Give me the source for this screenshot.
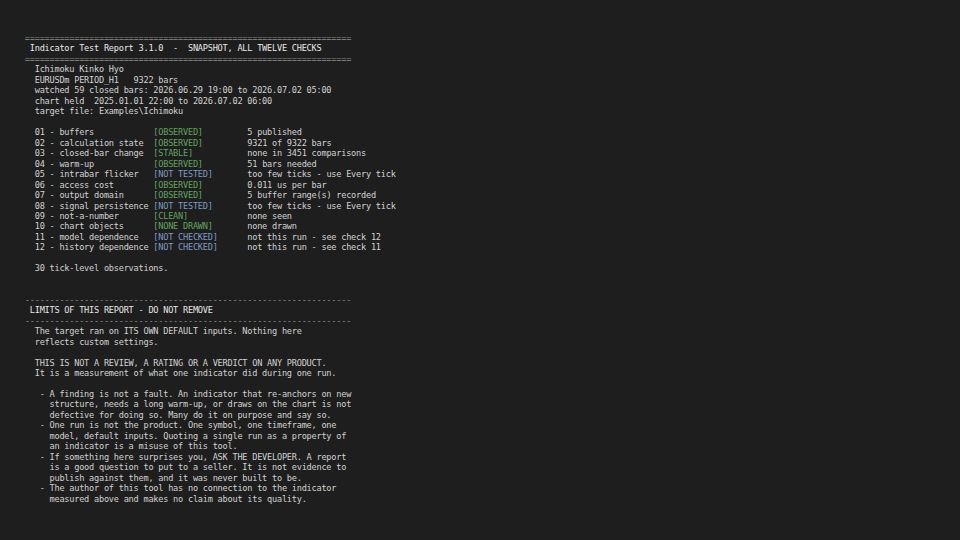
import React from 'react';

type Status = 'ok' | 'skip';

interface Check {
  no: string;
  name: string;
  tag: string;
  status: Status;
  note: string;
}

const checks: Check[] = [
  { no: '01', name: 'buffers', tag: '[OBSERVED]', status: 'ok', note: '5 published' },
  { no: '02', name: 'calculation state', tag: '[OBSERVED]', status: 'ok', note: '9321 of 9322 bars' },
  { no: '03', name: 'closed-bar change', tag: '[STABLE]', status: 'ok', note: 'none in 3451 comparisons' },
  { no: '04', name: 'warm-up', tag: '[OBSERVED]', status: 'ok', note: '51 bars needed' },
  { no: '05', name: 'intrabar flicker', tag: '[NOT TESTED]', status: 'skip', note: 'too few ticks - use Every tick' },
  { no: '06', name: 'access cost', tag: '[OBSERVED]', status: 'ok', note: '0.011 us per bar' },
  { no: '07', name: 'output domain', tag: '[OBSERVED]', status: 'ok', note: '5 buffer range(s) recorded' },
  { no: '08', name: 'signal persistence', tag: '[NOT TESTED]', status: 'skip', note: 'too few ticks - use Every tick' },
  { no: '09', name: 'not-a-number', tag: '[CLEAN]', status: 'ok', note: 'none seen' },
  { no: '10', name: 'chart objects', tag: '[NONE DRAWN]', status: 'ok', note: 'none drawn' },
  { no: '11', name: 'model dependence', tag: '[NOT CHECKED]', status: 'skip', note: 'not this run - see check 12' },
  { no: '12', name: 'history dependence', tag: '[NOT CHECKED]', status: 'skip', note: 'not this run - see check 11' },
];

const header = [
  'Ichimoku Kinko Hyo',
  'EURUSDm PERIOD_H1   9322 bars',
  'watched 59 closed bars: 2026.06.29 19:00 to 2026.07.02 05:00',
  'chart held  2025.01.01 22:00 to 2026.07.02 06:00',
  'target file: Examples\\Ichimoku',
];

const limits = [
  '  The target ran on ITS OWN DEFAULT inputs. Nothing here',
  '  reflects custom settings.',
  '',
  '  THIS IS NOT A REVIEW, A RATING OR A VERDICT ON ANY PRODUCT.',
  '  It is a measurement of what one indicator did during one run.',
  '',
  '   - A finding is not a fault. An indicator that re-anchors on new',
  '     structure, needs a long warm-up, or draws on the chart is not',
  '     defective for doing so. Many do it on purpose and say so.',
  '   - One run is not the product. One symbol, one timeframe, one',
  '     model, default inputs. Quoting a single run as a property of',
  '     an indicator is a misuse of this tool.',
  '   - If something here surprises you, ASK THE DEVELOPER. A report',
  '     is a good question to put to a seller. It is not evidence to',
  '     publish against them, and it was never built to be.',
  '   - The author of this tool has no connection to the indicator',
  '     measured above and makes no claim about its quality.',
];

function Line({ children, className = '' }: { children?: React.ReactNode; className?: string }) {
  return <div className={`h-[10.48px] whitespace-pre ${className}`}>{children ?? ' '}</div>;
}

function Rule({ char }: { char: string }) {
  return <Line className="text-[#8c8c8c]">{char.repeat(66)}</Line>;
}

export default function App() {
  return (
    <div
      className="h-screen w-full overflow-hidden bg-[#1e1e1e] pl-[24.8px] pt-[33px] text-[8.6px] leading-[10.48px] tracking-[-0.23px] text-[#d2d2d2]"
      style={{ fontFamily: '"DejaVu Sans Mono", "Liberation Mono", monospace' }}
    >
      <Rule char="=" />
      <Line className="text-[#e8e8e8]">{' Indicator Test Report 3.1.0  -  SNAPSHOT, ALL TWELVE CHECKS'}</Line>
      <Rule char="=" />
      {header.map((h) => (
        <Line key={h}>{'  ' + h}</Line>
      ))}
      <Line />

      {checks.map((c) => (
        <Line key={c.no}>
          {('  ' + c.no + ' - ' + c.name).padEnd(26)}
          <span className={c.status === 'ok' ? 'text-[#62a35f]' : 'text-[#7c9cc4]'}>{c.tag}</span>
          {' '.repeat(19 - c.tag.length)}
          {c.note}
        </Line>
      ))}
      <Line />
      <Line>{'  30 tick-level observations.'}</Line>
      <Line />
      <Line />

      <Rule char="-" />
      <Line className="text-[#e8e8e8]">{' LIMITS OF THIS REPORT - DO NOT REMOVE'}</Line>
      <Rule char="-" />
      {limits.map((l, i) => (
        <Line key={i}>{l}</Line>
      ))}
    </div>
  );
}
